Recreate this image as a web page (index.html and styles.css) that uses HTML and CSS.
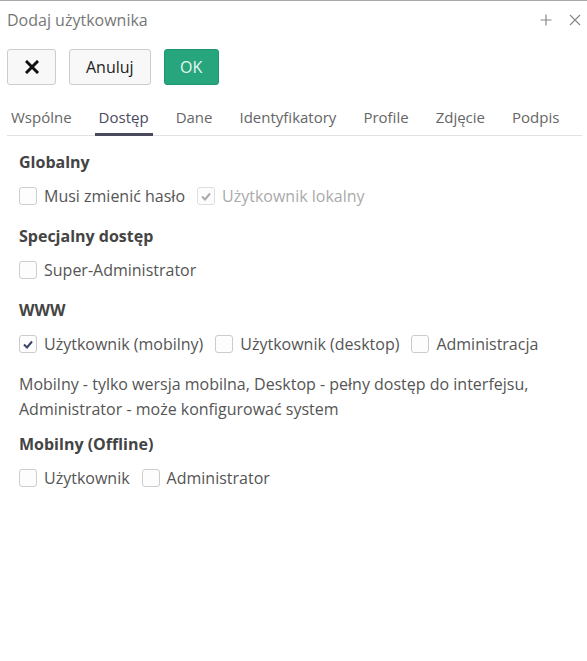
FILE: index.html
```html
<!DOCTYPE html>
<html lang="pl">
<head>
<meta charset="utf-8">
<title>Dodaj użytkownika</title>
<link rel="stylesheet" href="styles.css">
</head>
<body>
<div class="dialog">
  <div class="titlebar">
    <span class="title">Dodaj użytkownika</span>
    <div class="tools">
      <svg class="tool" width="12" height="12" viewBox="0 0 12 12"><path d="M6 0.5V11.5M0.5 6H11.5" stroke="#888" stroke-width="1.2" fill="none"/></svg>
      <svg class="tool" width="12" height="12" viewBox="0 0 12 12"><path d="M1 1L11 11M11 1L1 11" stroke="#888" stroke-width="1.2" fill="none"/></svg>
    </div>
  </div>
  <div class="toolbar">
    <button class="btn btn-icon"><svg width="14" height="14" viewBox="0 0 14 14"><path d="M2 2L12 12M12 2L2 12" stroke="#111" stroke-width="3" stroke-linecap="square" fill="none"/></svg></button>
    <button class="btn">Anuluj</button>
    <button class="btn btn-ok">OK</button>
  </div>
  <div class="tabs">
    <div class="tab">Wspólne</div>
    <div class="tab active">Dostęp</div>
    <div class="tab">Dane</div>
    <div class="tab">Identyfikatory</div>
    <div class="tab">Profile</div>
    <div class="tab">Zdjęcie</div>
    <div class="tab">Podpis</div>
  </div>
  <div class="content">
    <h3 class="heading">Globalny</h3>
    <div class="row">
      <label class="check"><span class="box"></span>Musi zmienić hasło</label>
      <label class="check disabled"><span class="box checked"><svg width="10" height="9" viewBox="0 0 10 9"><path d="M1 4.5L4 7.5L9 1.5" stroke="currentColor" stroke-width="2" fill="none"/></svg></span>Użytkownik lokalny</label>
    </div>
    <h3 class="heading">Specjalny dostęp</h3>
    <div class="row">
      <label class="check"><span class="box"></span>Super-Administrator</label>
    </div>
    <h3 class="heading">WWW</h3>
    <div class="row">
      <label class="check"><span class="box checked"><svg width="10" height="9" viewBox="0 0 10 9"><path d="M1 4.5L4 7.5L9 1.5" stroke="currentColor" stroke-width="2" fill="none"/></svg></span>Użytkownik (mobilny)</label>
      <label class="check"><span class="box"></span>Użytkownik (desktop)</label>
      <label class="check"><span class="box"></span>Administracja</label>
    </div>
    <p class="note">Mobilny - tylko wersja mobilna, Desktop - pełny dostęp do interfejsu, Administrator - może konfigurować system</p>
    <h3 class="heading">Mobilny (Offline)</h3>
    <div class="row">
      <label class="check"><span class="box"></span>Użytkownik</label>
      <label class="check"><span class="box"></span>Administrator</label>
    </div>
  </div>
</div>
</body>
</html>
```

FILE: styles.css
```css
* { box-sizing: border-box; }
html, body { margin: 0; padding: 0; background: #fff; }
body {
  font-family: "Open Sans", "DejaVu Sans", sans-serif;
  color: #555;
  height: 661px;
}
.dialog {
  border-top: 1px solid #a8a8a8;
  height: 100%;
}
.titlebar {
  display: flex;
  align-items: center;
  justify-content: space-between;
  height: 38px;
  padding: 0 6px 0 7px;
}
.title {
  font-size: 16px;
  color: #777;
}
.tools {
  display: flex;
  gap: 17px;
  align-items: center;
}
.toolbar {
  display: flex;
  gap: 13px;
  padding: 10px 7px 0;
}
.btn {
  height: 36px;
  padding: 0 16px;
  border: 1px solid #ccc;
  border-radius: 3px;
  background: #f8f8f8;
  font-family: inherit;
  font-size: 16px;
  color: #222;
  display: flex;
  align-items: center;
  justify-content: center;
}
.btn-icon { width: 49px; padding: 0; }
.btn-ok {
  width: 55px;
  padding: 0;
  background: #27a57c;
  border-color: #1f9470;
  color: #e8f7f1;
}
.tabs {
  display: flex;
  gap: 19px;
  margin: 14px 5px 0 7px;
  border-bottom: 1px solid #e2e2e2;
  height: 37px;
}
.tab {
  font-size: 15px;
  color: #666;
  padding: 8px 4px 0;
  height: 36px;
}
.tab.active {
  color: #4a4a5e;
  border-bottom: 3px solid #4a4a5e;
  height: 37px;
}
.content {
  padding: 14px 19px 0;
}
.heading {
  margin: 0;
  font-size: 16px;
  font-weight: 700;
  color: #444;
  line-height: 24px;
}
.row {
  display: flex;
  gap: 12px;
  align-items: center;
  height: 24px;
  margin: 10px 0 16px;
}
.check {
  display: flex;
  align-items: center;
  gap: 7px;
  font-size: 16px;
  line-height: 24px;
  height: 24px;
  color: #555;
}
.check.disabled { color: #aaa; }
.box {
  width: 18px;
  height: 18px;
  border: 1px solid #ccc;
  border-radius: 3px;
  background: #fdfdfd;
  display: flex;
  align-items: center;
  justify-content: center;
  color: #3a4266;
}
.check.disabled .box { color: #aaa; border-color: #ddd; }
.note {
  margin: 0 0 10px;
  font-size: 16px;
  line-height: 25px;
  color: #555;
}
```
